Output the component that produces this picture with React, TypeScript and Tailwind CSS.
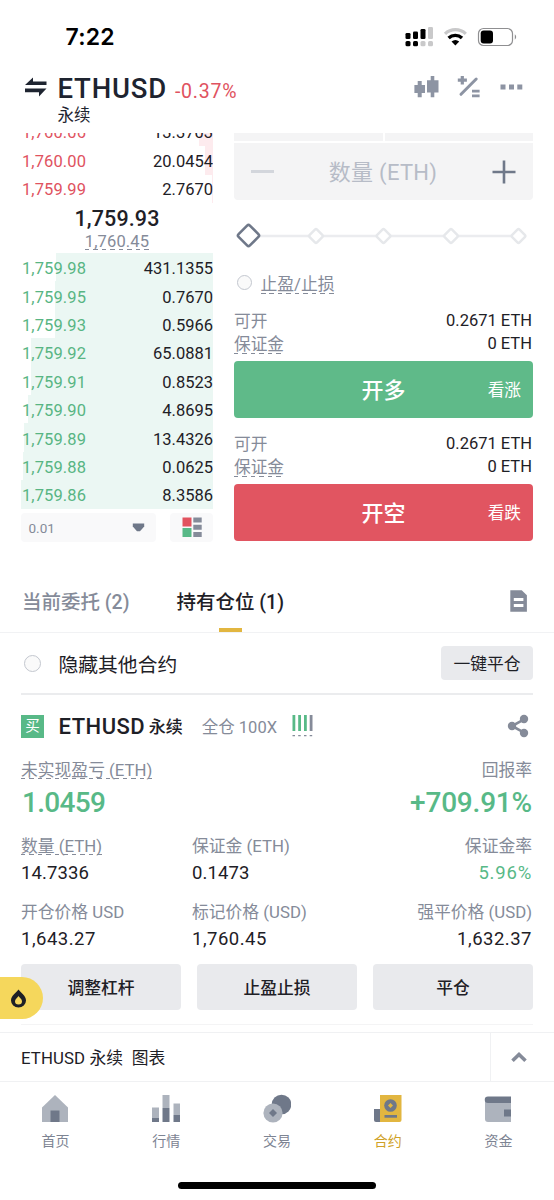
import type { ReactNode } from "react";

const bids = [
  { price: "1,759.98", qty: "431.1355", depth: "w-[157px]" },
  { price: "1,759.95", qty: "0.7670", depth: "w-[158px]" },
  { price: "1,759.93", qty: "0.5966", depth: "w-[158px]" },
  { price: "1,759.92", qty: "65.0881", depth: "w-[182px]" },
  { price: "1,759.91", qty: "0.8523", depth: "w-[182px]" },
  { price: "1,759.90", qty: "4.8695", depth: "w-[185px]" },
  { price: "1,759.89", qty: "13.4326", depth: "w-[189px]" },
  { price: "1,759.88", qty: "0.0625", depth: "w-[190px]" },
  { price: "1,759.86", qty: "8.3586", depth: "w-[192px]" },
];

const asks = [
  { price: "1,760.06", qty: "13.3703", depth: "w-[14px]" },
  { price: "1,760.00", qty: "20.0454", depth: "w-[8px]" },
  { price: "1,759.99", qty: "2.7670", depth: "w-px" },
];

function Dashed({ children, line = "bottom-[3px]" }: { children: ReactNode; line?: string }) {
  return (
    <span className="relative inline-block">
      {children}
      <span
        className={`absolute left-0 h-px w-full bg-[repeating-linear-gradient(90deg,#858b99_0_4.5px,transparent_4.5px_8.5px)] ${line}`}
      />
    </span>
  );
}

function BookRow({ price, qty, depth, side }: { price: string; qty: string; depth: string; side: "ask" | "bid" }) {
  return (
    <div
      className={`relative flex h-[28.4px] shrink-0 items-center justify-between pl-px text-[16.5px] leading-none ${side === "bid" ? "pt-[4.5px]" : "pt-[3px]"}`}
    >
      <div className={`absolute top-0 right-0 h-full ${side === "bid" ? "bg-[#ebf7f3]" : "bg-[#fdebee]"} ${depth}`} />
      <span className={`relative tracking-[0.1px] ${side === "bid" ? "text-[#58b583]" : "text-[#e05260]"}`}>{price}</span>
      <span className="relative text-[#1e2026]">{qty}</span>
    </div>
  );
}

function StatusBar() {
  return (
    <div className="flex h-[62px] shrink-0 items-start justify-between pt-[24px] pr-[37px] pl-[65.5px]">
      <span className="font-[Inter] text-[23px] leading-[27px] font-semibold tracking-[0.2px] text-black">7:22</span>
      <svg className="mt-[2px]" width="114" height="22" viewBox="403 26 114 22">
        <g fill="#000">
          <rect x="405.5" y="33" width="5" height="6" rx="1.3" />
          <rect x="413" y="31.5" width="5" height="7.5" rx="1.3" />
          <rect x="420.5" y="29" width="5" height="10" rx="1.3" />
          <rect x="405.5" y="41" width="5" height="5.2" rx="1.5" />
          <rect x="413" y="41" width="5" height="5.2" rx="1.5" />
        </g>
        <g fill="#c9c9ca">
          <rect x="428" y="27" width="5" height="12" rx="1.3" />
          <rect x="420.5" y="41" width="5" height="5.2" rx="1.5" />
          <rect x="428" y="41" width="5" height="5.2" rx="1.5" />
        </g>
        <path d="M445 33.8 A15 15 0 0 1 465.8 33.8" fill="none" stroke="#c9c9ca" strokeWidth="3.2" />
        <path d="M448.6 38 A9.8 9.8 0 0 1 462 38" fill="none" stroke="#000" strokeWidth="3.4" />
        <path d="M451.5 41.5 A6 6 0 0 1 459.2 41.5 L455.4 45.5 Z" fill="#000" />
        <rect x="478.5" y="28.5" width="34" height="17" rx="5" fill="none" stroke="#8f8f91" strokeWidth="1.2" />
        <rect x="480.7" y="30.5" width="12.3" height="13" rx="3" fill="#000" />
        <path d="M514.8 34.3 Q517.6 37 514.8 39.7 Z" fill="#8f8f91" />
      </svg>
    </div>
  );
}

function Header() {
  return (
    <div className="flex h-[71px] shrink-0 justify-between pr-[31px] pl-[25px]">
      <div className="flex">
        <svg className="mt-[14.5px] mr-[10.5px]" width="22" height="21" viewBox="0 0 22 21" fill="#1e2430">
          <path d="M0 8 L8 0.5 V4.5 H21.5 V8 Z" />
          <path d="M21.5 11.5 L14 19.5 V15.3 H0 V11.5 Z" />
        </svg>
        <div>
          <div className="flex items-baseline leading-[32px] whitespace-nowrap">
            <span className="mt-[12px] text-[27.5px] leading-[30px] font-medium tracking-[0.8px] text-[#1e2430]">ETHUSD</span>
            <span className="ml-[8px] text-[19.5px] leading-[24px] tracking-[0.75px] text-[#e05260]">-0.37%</span>
          </div>
          <div className="text-[16.5px] leading-[24px] text-[#1e2430]">永续</div>
        </div>
      </div>
      <svg className="mt-[12px]" width="110" height="26" viewBox="413 74 110 26" fill="#8d94a3">
        <path d="M417.7 81h4v4h3.3v8h-3.3v4.3h-4V93h-3.3v-8h3.3z" />
        <path d="M430.7 76h3.6v4.2h4.2v12.2h-4.2v4.9h-3.6v-4.9h-3.7V80.2h3.7z" />
        <path d="M460.7 76h3.2v2.6h3v3.2h-3v2.7h-3.2v-2.7h-2.9v-3.2h2.9z" />
        <path d="M461 94.3 L476.2 79" stroke="#8d94a3" strokeWidth="3" strokeLinecap="round" />
        <path d="M472 89.7h7.6v2.7h-7.6zM472 94.5h7.6v2.7h-7.6z" />
        <path d="M500.5 84.6h5v5h-5zM509 84.6h5v5h-5zM517.3 84.6h5v5h-5z" />
      </svg>
    </div>
  );
}

function OrderBook() {
  return (
    <div className="flex w-[192px] flex-col">
      <div className="flex h-[70px] flex-col justify-end overflow-hidden">
        {asks.map((r) => (
          <BookRow key={r.price} {...r} side="ask" />
        ))}
      </div>
      <div className="flex h-[50px] flex-col items-center">
        <span className="mt-[3px] text-[21.5px] leading-[26px] font-medium tracking-[0.1px] text-[#1e2026]">1,759.93</span>
        <span className="text-[16.5px] leading-[20px] tracking-[0.15px] text-[#858b99]">
          <Dashed line="bottom-[2px]">1,760.45</Dashed>
        </span>
      </div>
      {bids.map((r) => (
        <BookRow key={r.price} {...r} side="bid" />
      ))}
      <div className="mt-[4.4px] flex justify-between">
        <div className="flex h-[29px] w-[135px] items-center justify-between rounded-[4px] bg-[#f9f9fa] pr-[11px] pl-[7.5px] text-[13.5px] text-[#858b99]">
          <span className="pt-px">0.01</span>
          <svg className="shrink-0" width="13" height="9" viewBox="0 0 13 9">
            <path d="M0.8 0.5h11.4v3L8 8.2H5L.8 3.5z" fill="#6f7889" />
          </svg>
        </div>
        <div className="flex h-[29px] w-[43px] items-center justify-center rounded-[4px] bg-[#f9f9fa]">
          <svg width="20" height="20" viewBox="0 0 20 20">
            <path d="M0.5 0.5h9v9h-9z" fill="#e2535f" />
            <path d="M0.5 11h9v9h-9z" fill="#58b987" />
            <path d="M11.3 0.5h8.4v5h-8.4zM11.3 7.7h8.4v5h-8.4zM11.3 15h8.4v5h-8.4z" fill="#858b99" />
          </svg>
        </div>
      </div>
    </div>
  );
}

function Available() {
  return (
    <div className="text-[16.7px] leading-[23px]">
      <div className="flex justify-between">
        <span className="pt-px text-[#858b99]">可开</span>
        <span className="pr-px text-[16.5px] text-[#1e2026]">0.2671 ETH</span>
      </div>
      <div className="-mt-px flex justify-between">
        <span className="pt-px text-[#858b99]">
          <Dashed line="bottom-[2px]">保证金</Dashed>
        </span>
        <span className="pr-px text-[16.5px] text-[#1e2026]">0 ETH</span>
      </div>
    </div>
  );
}

function TradeButton({ label, hint, color }: { label: string; hint: string; color: string }) {
  return (
    <div className={`grid h-[57px] grid-cols-[1fr_auto_1fr] items-center rounded-[4px] pr-[12px] text-white ${color}`}>
      <span />
      <span className="pt-[2px] pl-[12px] text-[22px] font-medium">{label}</span>
      <span className="pt-[3px] text-right text-[16.7px]">{hint}</span>
    </div>
  );
}

function OrderForm() {
  return (
    <div className="flex w-[299px] flex-col">
      <div className="grid h-[8px] grid-cols-2 gap-[2px]">
        <div className="bg-[#f4f4f5]" />
        <div className="bg-[#f4f4f5]" />
      </div>
      <div className="mt-[2px] flex h-[57px] items-center justify-between rounded-b-[4px] bg-[#f4f4f5] pr-[17px] pl-[17px]">
        <div className="h-[2.5px] w-[23px] bg-[#d3d6dc]" />
        <span className="pt-[2px] text-[22px] tracking-[0.3px] text-[#b7bcc7]">数量 (ETH)</span>
        <svg width="24" height="24" viewBox="0 0 24 24">
          <path d="M12 0.5v23M0.5 12h23" stroke="#6f7889" strokeWidth="2.6" />
        </svg>
      </div>
      <svg className="mt-[20px] shrink-0" width="299" height="32" viewBox="234 220 299 32" fill="#fff">
        <path d="M248 236H518" stroke="#ebecef" strokeWidth="2.5" />
        {[316, 383.5, 451, 518.5].map((x) => (
          <rect key={x} x={x - 5.2} y="230.8" width="10.4" height="10.4" rx="1.5" stroke="#e6e8eb" strokeWidth="2.5" transform={`rotate(45 ${x} 236)`} />
        ))}
        <rect x="240.5" y="227.5" width="16" height="16" rx="2" stroke="#6f7889" strokeWidth="2.6" transform="rotate(45 248.5 235.5)" />
      </svg>
      <div className="mt-[18px] flex h-[25px] items-center pl-[3px]">
        <span className="size-[15px] rounded-full border border-[#c3c7cf] bg-[#fafafa]" />
        <span className="ml-[8.5px] pt-[2px] text-[16.8px] leading-[22px] text-[#858b99]">
          <Dashed line="bottom-[1px]">止盈/止损</Dashed>
        </span>
      </div>
      <div className="mt-[13.5px]">
        <Available />
      </div>
      <div className="mt-[5.5px]">
        <TradeButton label="开多" hint="看涨" color="bg-[#5fba89]" />
      </div>
      <div className="mt-[14px]">
        <Available />
      </div>
      <div className="mt-[5px]">
        <TradeButton label="开空" hint="看跌" color="bg-[#e15561]" />
      </div>
    </div>
  );
}

function Tabs() {
  return (
    <div className="flex h-[91px] shrink-0 items-end justify-between border-b border-[#f1f2f4] pr-[26px] pl-[22px]">
      <div className="flex gap-[47px] text-[19.5px] leading-[28px] font-medium">
        <span className="mb-[15px] text-[#858b99]">当前委托 (2)</span>
        <div className="flex flex-col items-center text-[#1e2026]">
          <span>持有仓位 (1)</span>
          <span className="mt-[11px] h-[4px] w-[23px] bg-[#e2b640]" />
        </div>
      </div>
      <svg className="mb-[20px]" width="18" height="22" viewBox="0 0 18 22">
        <path d="M0.3 0.3h11.4l5.2 5V21.7H.3z" fill="#858b99" />
        <path d="M3.8 8h9.6v3H3.8zM3.8 14h9.6v3H3.8z" fill="#fff" />
      </svg>
    </div>
  );
}

type CellProps = { label: string; value: string; dashed?: boolean; right?: boolean; green?: boolean; spacing?: string };

function Cell({ label, value, dashed, right, green, spacing = "tracking-[0.1px]" }: CellProps) {
  return (
    <div className={`flex flex-col ${right ? "items-end pr-px" : "items-start"}`}>
      <span className="pt-px text-[16.8px] leading-[24px] text-[#858b99]">{dashed ? <Dashed>{label}</Dashed> : label}</span>
      <span className={`mt-[2px] text-[18.5px] leading-[26px] ${spacing} ${green ? "text-[#58b987]" : "text-[#1e2026]"}`}>{value}</span>
    </div>
  );
}

function Position() {
  return (
    <div className="flex flex-col px-[21px]">
      <div className="flex h-[62px] shrink-0 items-center justify-between border-b-2 border-[#ebecee]">
        <div className="flex items-center pt-px pl-[3px]">
          <span className="size-[17px] rounded-full border border-[#c3c7cf] bg-[#fafafa]" />
          <span className="ml-[17.5px] pt-[4px] text-[19.8px] text-[#1e2026]">隐藏其他合约</span>
        </div>
        <button className="h-[34px] w-[92px] rounded-[4px] bg-[#e9eaed] pt-[4px] text-[16.8px] text-[#1e2026]">一键平仓</button>
      </div>
      <div className="mt-[16px] flex h-[31px] items-center justify-between pr-[4px]">
        <div className="flex items-center">
          <span className="flex size-[23px] items-center justify-center bg-[#58b987] pt-px text-[14.5px] text-white">买</span>
          <span className="ml-[14.5px] text-[22px] leading-[26px] font-medium tracking-[0.5px] text-[#1e2026]">ETHUSD</span>
          <span className="ml-[3.5px] pt-[3px] text-[17px] font-medium text-[#1e2026]">永续</span>
          <span className="ml-[19px] pt-[3px] text-[16.5px] text-[#858b99]">全仓 100X</span>
          <svg className="ml-[14.5px]" width="22" height="24" viewBox="0 0 22 24">
            <path d="M0.5 0h2.8v16H.5zM6.2 0h2.8v16H6.2zM12 0h2.8v16H12z" fill="#58b987" />
            <path d="M17.7 0h2.8v16h-2.8zM.5 20h2.5v1.3H.5zM6.2 20h2.5v1.3H6.2zM12 20h2.5v1.3H12zM17.7 20h2.5v1.3h-2.5z" fill="#858b99" />
          </svg>
        </div>
        <svg className="mb-[2px]" width="22" height="24" viewBox="0 0 22 24" fill="#858b99">
          <path d="M17 5.3 5 12l12 6.7" fill="none" stroke="#858b99" strokeWidth="2.6" />
          <circle cx="17" cy="5" r="4.2" />
          <circle cx="5" cy="12" r="4.2" />
          <circle cx="17" cy="19" r="4.2" />
        </svg>
      </div>
      <div className="mt-[15px] flex justify-between pt-px text-[16.8px] leading-[24px] text-[#858b99]">
        <Dashed>未实现盈亏 (ETH)</Dashed>
        <span className="pr-px">回报率</span>
      </div>
      <div className="mt-[3px] flex justify-between pr-px pl-px text-[28px] leading-[36px] font-medium text-[#58b987]">
        <span className="tracking-[-0.7px]">1.0459</span>
        <span className="tracking-[-0.2px]">+709.91%</span>
      </div>
      <div className="mt-[12px] grid grid-cols-[171px_1fr_auto] gap-y-[13px]">
        <Cell label="数量 (ETH)" value="14.7336" dashed />
        <Cell label="保证金 (ETH)" value="0.1473" />
        <Cell label="保证金率" value="5.96%" right green spacing="tracking-[0.8px]" />
        <Cell label="开仓价格 USD" value="1,643.27" spacing="tracking-[0.5px]" />
        <Cell label="标记价格 (USD)" value="1,760.45" spacing="tracking-[0.5px]" />
        <Cell label="强平价格 (USD)" value="1,632.37" right spacing="tracking-[0.5px]" />
      </div>
      <div className="mt-[12px] grid grid-cols-3 gap-[16px]">
        {["调整杠杆", "止盈止损", "平仓"].map((t) => (
          <button key={t} className="h-[46px] rounded-[4px] bg-[#e9eaed] pt-[4px] text-[16.8px] font-medium text-[#1e2026]">
            {t}
          </button>
        ))}
      </div>
      <div className="mt-[14px] h-px bg-[#f4f4f5]" />
    </div>
  );
}

const icons = {
  home: (
    <>
      <path d="M14 1 27 13.5V28H1V13.5z" fill="#adb3bd" />
      <path d="M9.5 16.5h9V28h-9z" fill="#6f7889" />
    </>
  ),
  market: (
    <>
      <path d="M0 13.5h7V24H0zM10.5 1h7v13h-7zM21.5 9.5h7V21h-7z" fill="#adb3bd" />
      <path d="M0 24h7v4H0zM10.5 14h7v14h-7zM21.5 21h7v7h-7z" fill="#6f7889" />
    </>
  ),
  trade: (
    <>
      <circle cx="18.5" cy="10.5" r="9.8" fill="#6f7889" />
      <circle cx="10" cy="19" r="9.6" fill="#adb3bd" />
      <path d="M10 15 14 19 10 23 6 19z" fill="#6f7889" />
    </>
  ),
  futures: (
    <>
      <path d="M0 15h6v13H2a2 2 0 0 1-2-2z" fill="#6f7889" />
      <path d="M6 1h21.5v25a2 2 0 0 1-2 2H6z" fill="#e2b640" />
      <circle cx="16.5" cy="11.5" r="6.3" fill="#6f7889" />
      <path d="M16.5 9 19 11.5 16.5 14 14 11.5z" fill="#e2b640" />
      <path d="M10.5 21h12.5v2.7H10.5z" fill="#6f7889" />
    </>
  ),
  wallet: (
    <>
      <path d="M1 6h26v22H4a3 3 0 0 1-3-3z" fill="#adb3bd" />
      <path d="M4 2.5h23V9H4a3.2 3.2 0 0 1 0-6.5zM20 15.5h7v7h-7z" fill="#6f7889" />
    </>
  ),
};

const nav = [
  { label: "首页", icon: icons.home },
  { label: "行情", icon: icons.market },
  { label: "交易", icon: icons.trade },
  { label: "合约", icon: icons.futures, active: true },
  { label: "资金", icon: icons.wallet },
];

export default function App() {
  return (
    <div className="relative flex h-[1200px] w-[554px] flex-col overflow-hidden bg-white font-[Roboto,'Noto_Sans_CJK_SC',sans-serif]">
      <StatusBar />
      <Header />
      <div className="flex h-[409px] shrink-0 gap-[21px] pl-[21px]">
        <OrderBook />
        <OrderForm />
      </div>
      <Tabs />
      <Position />
      <div className="mt-auto flex h-[50px] shrink-0 items-stretch border-y border-[#f0f1f3]">
        <div className="flex flex-1 items-center pt-[3px] pl-[21px] text-[16.8px] tracking-[0.1px] whitespace-pre text-[#1e2026]">{"ETHUSD 永续  图表"}</div>
        <div className="flex w-[64px] items-center justify-center border-l border-[#f0f1f3] pr-[7px]">
          <svg width="16" height="12" viewBox="0 0 16 12">
            <path d="M1.5 9.8 8 3.5l6.5 6.3" fill="none" stroke="#858b99" strokeWidth="3.6" />
          </svg>
        </div>
      </div>
      <div className="grid h-[118px] shrink-0 grid-cols-5 grid-rows-[1fr_auto]">
        {nav.map((n) => (
          <div key={n.label} className="flex flex-col items-center pt-[12px]">
            <svg width="28.5" height="29" viewBox="0 0 28.5 29">
              {n.icon}
            </svg>
            <span className={`mt-[8px] text-[14px] leading-[21px] ${n.active ? "text-[#cfa127]" : "text-[#7d8493]"}`}>{n.label}</span>
          </div>
        ))}
        <div className="col-span-5 mx-auto mb-[11.5px] h-[7px] w-[198px] rounded-full bg-black" />
      </div>
      <div className="absolute top-[977px] left-0 flex h-[42px] w-[43px] items-center rounded-r-full bg-[#f5d75c] pl-[10px]">
        <svg width="17" height="19" viewBox="0 0 17 19">
          <path d="M8.5 0.5C11 4 16 6.5 16 11.5a7.5 7 0 0 1-15 0C1 6.5 6 4 8.5 0.5z" fill="#1e2026" />
          <path d="M8.5 7C9.5 9 12 10 12 12.2a3.5 3.3 0 0 1-7 0C5 10 7.5 9 8.5 7z" fill="#f5d75c" />
        </svg>
      </div>
    </div>
  );
}
